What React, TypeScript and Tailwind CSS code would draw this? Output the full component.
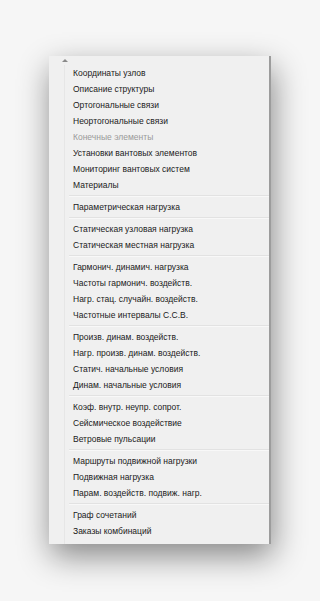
const groups: { label: string; disabled?: boolean }[][] = [
  [
    { label: "Координаты узлов" },
    { label: "Описание структуры" },
    { label: "Ортогональные связи" },
    { label: "Неортогональные связи" },
    { label: "Конечные элементы", disabled: true },
    { label: "Установки вантовых элементов" },
    { label: "Мониторинг вантовых систем" },
    { label: "Материалы" },
  ],
  [{ label: "Параметрическая нагрузка" }],
  [
    { label: "Статическая узловая нагрузка" },
    { label: "Статическая местная нагрузка" },
  ],
  [
    { label: "Гармонич. динамич. нагрузка" },
    { label: "Частоты гармонич. воздейств." },
    { label: "Нагр. стац. случайн. воздейств." },
    { label: "Частотные интервалы С.С.В." },
  ],
  [
    { label: "Произв. динам. воздейств." },
    { label: "Нагр. произв. динам. воздейств." },
    { label: "Статич. начальные условия" },
    { label: "Динам. начальные условия" },
  ],
  [
    { label: "Коэф. внутр. неупр. сопрот." },
    { label: "Сейсмическое воздействие" },
    { label: "Ветровые пульсации" },
  ],
  [
    { label: "Маршруты подвижной нагрузки" },
    { label: "Подвижная нагрузка" },
    { label: "Парам. воздейств. подвиж. нагр." },
  ],
  [{ label: "Граф сочетаний" }, { label: "Заказы комбинаций" }],
];

export default function App() {
  return (
    <div
      className="h-[601px] w-[320px] overflow-hidden bg-[#f6f6f6] pl-[49px] pt-[56px]"
      style={{ fontFamily: '"Liberation Sans", Arial, sans-serif' }}
    >
      <div className="flex h-[488px] w-[222px] flex-col border-r-2 border-[#9c9c9c] bg-[#f0f0f0] shadow-[2px_12px_30px_rgba(0,0,0,0.45)]">
        <div className="flex h-[9px] w-[16px] items-center justify-end">
          <div className="-mr-[3px] h-0 w-0 border-x-[3px] border-b-[3px] border-x-transparent border-b-[#8a8a8a]" />
        </div>
        <div className="flex flex-1 flex-col">
          {groups.map((group, gi) => (
            <div key={gi} className="flex flex-col">
              {gi > 0 && (
                <div className="flex h-[6px]">
                  <div className="w-[16px] border-r border-[#e6e6e6]" />
                  <div className="flex flex-1 flex-col justify-center pl-[4px]">
                    <div className="h-px bg-[#e2e2e2]" />
                    <div className="h-px bg-[#f8f8f8]" />
                  </div>
                </div>
              )}
              {group.map((item) => (
                <div key={item.label} className="flex h-[16px]">
                  <div className="w-[16px] border-r border-[#e6e6e6]" />
                  <div
                    className={`flex items-center pl-[8px] pt-[1px] text-[8.5px] leading-none ${
                      item.disabled ? "text-[#9a9a9a]" : "text-[#1a1a1a]"
                    }`}
                  >
                    {item.label}
                  </div>
                </div>
              ))}
            </div>
          ))}
          <div className="flex flex-1">
            <div className="w-[16px] border-r border-[#e6e6e6]" />
          </div>
        </div>
      </div>
    </div>
  );
}
